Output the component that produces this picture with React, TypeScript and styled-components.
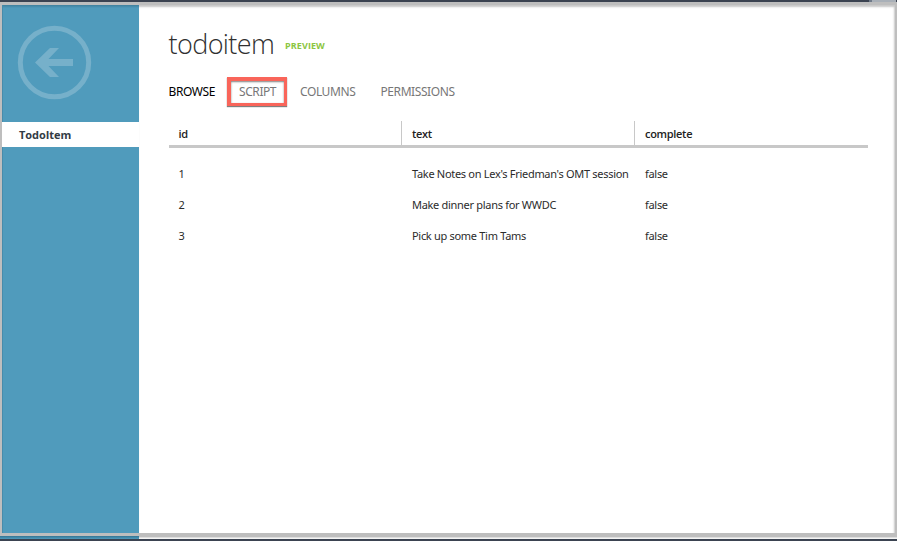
import React from "react";
import styled, { createGlobalStyle } from "styled-components";

const GlobalStyle = createGlobalStyle`
  * { box-sizing: border-box; }
  body { margin: 0; background: #fff; font-family: "Noto Sans", "Open Sans", sans-serif; }
`;

const Page = styled.div`
  display: flex;
  flex-direction: column;
  width: 897px;
  height: 541px;
  overflow: hidden;
`;

const TopBar = styled.div`
  display: flex;
  justify-content: flex-end;
  flex: 0 0 2px;
  background: #3b4351;
`;

const TopBarHandle = styled.div`
  width: 27px;
  margin-right: 1px;
  background: #a9b0b8;
  border-left: 3px solid #6f7a89;
`;

const Frame = styled.div`
  display: flex;
  flex: 0 0 534px;
  border: 2px solid #bebebe;
  border-top-width: 3px;
  border-bottom-width: 3px;
`;

const Sidebar = styled.aside`
  flex: 0 0 137px;
  background: linear-gradient(#3f7f9c, #509bbc 3px);
  box-shadow: inset 1px 0 0 #478cab;
`;

const BackButton = styled.button`
  display: block;
  width: 75px;
  height: 75px;
  margin: 20px 0 22px 15px;
  padding: 0;
  border: 0;
  background: none;

  svg { display: block; }
`;

const SidebarItem = styled.div`
  height: 25px;
  padding-left: 17px;
  background: #fff;
  color: #333b45;
  font: 700 11px/25px "Open Sans", sans-serif;
  letter-spacing: -0.05px;
`;

const Main = styled.main`
  flex: 1;
  padding: 21px 0 0 29.5px;
  background: #fff;
  box-shadow: inset -1px 2px 2px rgba(0, 0, 0, 0.22);
`;

const Heading = styled.header`
  display: flex;
  height: 36px;
`;

const Title = styled.h1`
  width: 116.5px;
  margin: 0;
  color: #303030;
  font: 300 27px/35px "Open Sans", sans-serif;
  letter-spacing: -0.6px;
`;

const PreviewTag = styled.span`
  color: #8cc63f;
  font: 700 9px/40px "Open Sans", sans-serif;
  letter-spacing: 0.1px;
`;

const Tabs = styled.nav`
  display: flex;
  height: 29px;
  margin-top: 15px;
`;

const Tab = styled.a<{ $width: number; $active?: boolean }>`
  width: ${(p) => p.$width}px;
  color: ${(p) => (p.$active ? "#000" : "#777")};
  font-size: 12px;
  line-height: 29px;
  letter-spacing: -0.42px;
  white-space: nowrap;
`;

const HighlightedTab = styled(Tab)`
  height: 29px;
  margin-right: 13px;
  padding-left: 8px;
  border: solid #f9655a;
  border-width: 4px 3px 3px 4px;
  line-height: 21px;
  box-shadow: 0 1px 1px rgba(0, 0, 0, 0.5), inset 0 1px 2px rgba(0, 0, 0, 0.5);
`;

const Table = styled.div`
  width: 699px;
  margin: 15px 0 0 0.5px;
`;

const HeaderRow = styled.div`
  display: grid;
  grid-template-columns: 232px 233px 1fr;
  height: 27px;
  margin-bottom: 10px;
  border-bottom: 3px solid #c8c8c8;
`;

const HeaderCell = styled.div`
  padding-left: 10px;
  color: #222;
  font: 600 11px/26px "Open Sans", sans-serif;
  letter-spacing: -0.3px;

  &:first-child { padding-left: 9.5px; }
  & + & { border-left: 1px solid #c8c8c8; }
`;

const Row = styled.div`
  display: grid;
  grid-template-columns: 233px 233px 1fr;
  height: 31px;
`;

const Cell = styled.div`
  padding-left: 10px;
  color: #2b2b2b;
  font-size: 11px;
  line-height: 31px;
  letter-spacing: -0.3px;
  white-space: nowrap;

  &:first-child { padding-left: 9.5px; }
`;

const BottomEdge = styled.div`
  display: flex;
  flex: 0 0 3px;
  background: linear-gradient(#bebebe 1px, #dedede 1px 2px, #f5f5f5 2px);
`;

const BottomEdgeSidebar = styled.div`
  width: 139px;
  background: linear-gradient(#347594, #509bbc);
`;

const BottomBar = styled.div`
  flex: 0 0 2px;
  background: #3b4351;
`;

const items = [
  { id: 1, text: "Take Notes on Lex's Friedman's OMT session", complete: false },
  { id: 2, text: "Make dinner plans for WWDC", complete: false },
  { id: 3, text: "Pick up some Tim Tams", complete: false },
];

export default function App() {
  return (
    <Page>
      <GlobalStyle />
      <TopBar><TopBarHandle /></TopBar>
      <Frame>
        <Sidebar>
          <BackButton aria-label="Back">
            <svg width="75" height="75" viewBox="0 0 75 75" fill="none">
              <circle cx="37.5" cy="37.5" r="34.2" stroke="#76b0ca" strokeWidth="5" />
              <path d="M18 37.5 33 23h9L31.5 34H56v7H31.5L42 52h-9z" fill="#76b0ca" />
            </svg>
          </BackButton>
          <SidebarItem>TodoItem</SidebarItem>
        </Sidebar>
        <Main>
          <Heading>
            <Title>todoitem</Title>
            <PreviewTag>PREVIEW</PreviewTag>
          </Heading>
          <Tabs>
            <Tab $width={58.5} $active>BROWSE</Tab>
            <HighlightedTab $width={60}>SCRIPT</HighlightedTab>
            <Tab $width={80.5}>COLUMNS</Tab>
            <Tab $width={80}>PERMISSIONS</Tab>
          </Tabs>
          <Table>
            <HeaderRow>
              <HeaderCell>id</HeaderCell>
              <HeaderCell>text</HeaderCell>
              <HeaderCell>complete</HeaderCell>
            </HeaderRow>
            {items.map((item) => (
              <Row key={item.id}>
                <Cell>{item.id}</Cell>
                <Cell>{item.text}</Cell>
                <Cell>{String(item.complete)}</Cell>
              </Row>
            ))}
          </Table>
        </Main>
      </Frame>
      <BottomEdge><BottomEdgeSidebar /></BottomEdge>
      <BottomBar />
    </Page>
  );
}
